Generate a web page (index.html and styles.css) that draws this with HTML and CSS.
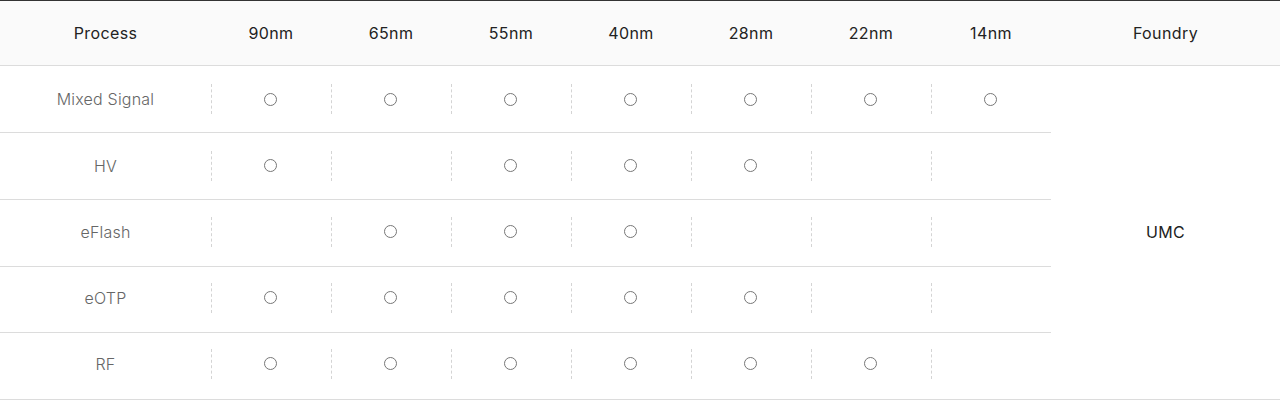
FILE: index.html
```html
<!DOCTYPE html>
<html lang="en">
<head>
<meta charset="utf-8">
<title>Process Table</title>
<link rel="stylesheet" href="styles.css">
</head>
<body>
<table class="proc">
  <colgroup>
    <col class="c-proc">
    <col class="c-nm"><col class="c-nm"><col class="c-nm"><col class="c-nm"><col class="c-nm"><col class="c-nm"><col class="c-nm">
    <col class="c-fd">
  </colgroup>
  <thead>
    <tr>
      <th>Process</th>
      <th>90nm</th><th>65nm</th><th>55nm</th><th>40nm</th><th>28nm</th><th>22nm</th><th>14nm</th>
      <th>Foundry</th>
    </tr>
  </thead>
  <tbody>
    <tr class="r1">
      <td class="name">Mixed Signal</td>
      <td><div class="cell"><span class="dot" title="○"></span></div></td>
      <td><div class="cell"><span class="dot" title="○"></span></div></td>
      <td><div class="cell"><span class="dot" title="○"></span></div></td>
      <td><div class="cell"><span class="dot" title="○"></span></div></td>
      <td><div class="cell"><span class="dot" title="○"></span></div></td>
      <td><div class="cell"><span class="dot" title="○"></span></div></td>
      <td><div class="cell"><span class="dot" title="○"></span></div></td>
      <td class="foundry" rowspan="5">UMC</td>
    </tr>
    <tr class="r2">
      <td class="name">HV</td>
      <td><div class="cell"><span class="dot" title="○"></span></div></td>
      <td><div class="cell"></div></td>
      <td><div class="cell"><span class="dot" title="○"></span></div></td>
      <td><div class="cell"><span class="dot" title="○"></span></div></td>
      <td><div class="cell"><span class="dot" title="○"></span></div></td>
      <td><div class="cell"></div></td>
      <td><div class="cell"></div></td>
    </tr>
    <tr class="r3">
      <td class="name">eFlash</td>
      <td><div class="cell"></div></td>
      <td><div class="cell"><span class="dot" title="○"></span></div></td>
      <td><div class="cell"><span class="dot" title="○"></span></div></td>
      <td><div class="cell"><span class="dot" title="○"></span></div></td>
      <td><div class="cell"></div></td>
      <td><div class="cell"></div></td>
      <td><div class="cell"></div></td>
    </tr>
    <tr class="r4">
      <td class="name">eOTP</td>
      <td><div class="cell"><span class="dot" title="○"></span></div></td>
      <td><div class="cell"><span class="dot" title="○"></span></div></td>
      <td><div class="cell"><span class="dot" title="○"></span></div></td>
      <td><div class="cell"><span class="dot" title="○"></span></div></td>
      <td><div class="cell"><span class="dot" title="○"></span></div></td>
      <td><div class="cell"></div></td>
      <td><div class="cell"></div></td>
    </tr>
    <tr class="r5">
      <td class="name">RF</td>
      <td><div class="cell"><span class="dot" title="○"></span></div></td>
      <td><div class="cell"><span class="dot" title="○"></span></div></td>
      <td><div class="cell"><span class="dot" title="○"></span></div></td>
      <td><div class="cell"><span class="dot" title="○"></span></div></td>
      <td><div class="cell"><span class="dot" title="○"></span></div></td>
      <td><div class="cell"><span class="dot" title="○"></span></div></td>
      <td><div class="cell"></div></td>
    </tr>
  </tbody>
</table>
</body>
</html>
```
FILE: styles.css
```css
html, body {
  margin: 0;
  padding: 0;
  background: #fff;
}
body {
  font-family: "Inter", "Liberation Sans", sans-serif;
}
.proc {
  width: 1280px;
  border-collapse: collapse;
  table-layout: fixed;
  border-top: 1px solid #333;
}
.c-proc { width: 211px; }
.c-nm { width: 120px; }
.c-fd { width: 229px; }

.proc th {
  height: 64px;
  padding: 0;
  background: #fafafa;
  border-bottom: 1px solid #dcdcdc;
  font-weight: 400;
  font-size: 16px;
  letter-spacing: 0.4px;
  color: #222;
  text-align: center;
  vertical-align: middle;
}
.proc td {
  padding: 0;
  border-bottom: 1px solid #dcdcdc;
  text-align: center;
  vertical-align: middle;
  font-size: 16px;
  letter-spacing: 0.2px;
  color: #666;
  font-weight: 300;
}
.proc tr.r1 td { height: 66px; }
.proc tr.r2 td { height: 65px; padding-bottom: 1px; }
.proc tr.r3 td { height: 63px; padding-bottom: 3px; }
.proc tr.r4 td { height: 61px; padding-bottom: 4px; }
.proc tr.r5 td { height: 61px; padding-bottom: 5px; }
.proc td.foundry {
  color: #222;
  font-size: 16px;
  letter-spacing: 0.3px;
  font-weight: 400;
  padding-bottom: 2px;
}
.cell {
  height: 30px;
  border-left: 1px dashed #d4d4d4;
  padding-right: 2px;
  display: flex;
  align-items: center;
  justify-content: center;
}
.dot {
  display: block;
  width: 11px;
  height: 11px;
  border: 1px solid #777;
  border-radius: 50%;
}
```
